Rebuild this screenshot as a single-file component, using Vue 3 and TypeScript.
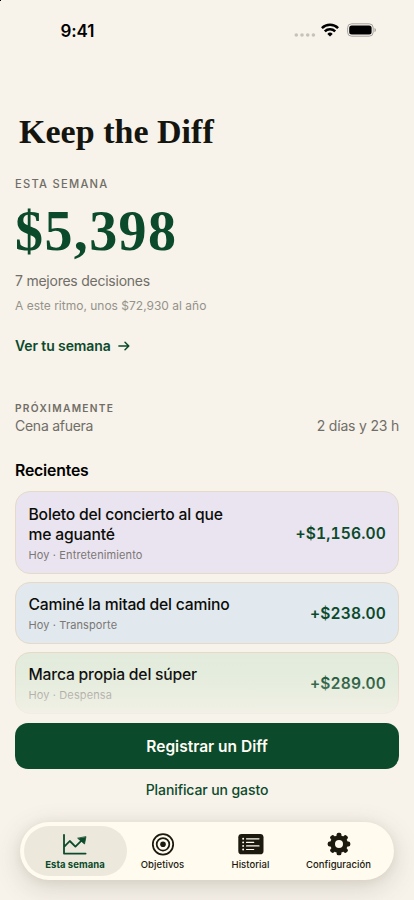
<script setup lang="ts">
interface Entry { title: string; meta: string; amount: string; tone: string }
interface Tab { label: string; icon: string; active?: boolean }

const entries: Entry[] = [
  { title: 'Boleto del concierto al que me aguanté', meta: 'Hoy · Entretenimiento', amount: '+$1,156.00', tone: 'lilac' },
  { title: 'Caminé la mitad del camino', meta: 'Hoy · Transporte', amount: '+$238.00', tone: 'blue' },
  { title: 'Marca propia del súper', meta: 'Hoy · Despensa', amount: '+$289.00', tone: 'green' },
]
const tabs: Tab[] = [
  { label: 'Esta semana', icon: 'chart', active: true },
  { label: 'Objetivos', icon: 'target' },
  { label: 'Historial', icon: 'list' },
  { label: 'Configuración', icon: 'gear' },
]
const teeth = [0, 45, 90, 135, 180, 225, 270, 315]
</script>

<template>
  <div class="screen">
    <i class="corner"></i>
    <header class="status">
      <span class="time">9:41</span>
      <div class="indicators">
        <svg class="dots" width="22" height="4" viewBox="0 0 22 4"><circle cx="2.3" cy="2" r="1.8" /><circle cx="8" cy="2" r="1.8" /><circle cx="13.7" cy="2" r="1.8" /><circle cx="19.4" cy="2" r="1.8" /></svg>
        <svg class="wifi" width="18" height="14" viewBox="0 0 18 14" fill="none" stroke="#000" stroke-width="2.5">
          <path d="M.9 5.1a11.5 11.5 0 0 1 16.2 0" /><path d="M3.8 8.3a7.4 7.4 0 0 1 10.4 0" />
          <path d="M6.3 10.9a3.8 3.8 0 0 1 5.4 0L9 13.6z" fill="#000" stroke="none" />
        </svg>
        <svg class="battery" width="30" height="14" viewBox="0 0 30 14">
          <rect x=".6" y=".8" width="25.6" height="12.4" rx="4" fill="none" stroke="#a5a29c" stroke-width="1" />
          <rect x="2.2" y="2.4" width="22.4" height="9.2" rx="2.5" />
          <path d="M27.5 5v4.2q1.5-.6 1.5-2.1t-1.5-2.1" fill="#a5a29c" />
        </svg>
      </div>
    </header>

    <h1 class="title">Keep the Diff</h1>

    <main class="content">
      <section class="summary">
        <p class="eyebrow">ESTA SEMANA</p>
        <p class="total">$5,398</p>
        <p class="count">7 mejores decisiones</p>
        <p class="pace">A este ritmo, unos $72,930 al año</p>
        <a class="link"><span>Ver tu semana</span>
          <svg width="12" height="10" viewBox="0 0 12 10" fill="none" stroke="currentColor" stroke-width="1.5" stroke-linecap="round" stroke-linejoin="round"><path d="M.9 5h9.8M7 1.2 10.8 5 7 8.8" /></svg>
        </a>
      </section>

      <section class="upcoming">
        <p class="eyebrow small">PRÓXIMAMENTE</p>
        <div class="row"><span class="what">Cena afuera</span><span class="when">2 días y 23 h</span></div>
      </section>

      <section class="recent">
        <h2>Recientes</h2>
        <article v-for="e in entries" :key="e.title" class="card" :class="e.tone">
          <div class="copy">
            <h3>{{ e.title }}</h3>
            <p>{{ e.meta }}</p>
          </div>
          <strong>{{ e.amount }}</strong>
        </article>
        <div class="fade"></div>
      </section>

      <button class="primary">Registrar un Diff</button>
      <button class="secondary">Planificar un gasto</button>
    </main>

    <nav class="tabs">
      <div v-for="t in tabs" :key="t.label" class="tab" :class="[t.icon, { active: t.active }]">
        <svg v-if="t.icon === 'chart'" width="26" height="24" viewBox="0 0 26 24" fill="none" stroke="currentColor" stroke-width="1.8" stroke-linecap="round" stroke-linejoin="round">
          <path d="M2 2.8v18.8h21.6M2.8 14.2l5-5.2 5.6 5.6 6.3-6.2" /><path d="m23.9 5-1.4 7-6.6-5.6z" fill="currentColor" stroke-width=".8" />
        </svg>
        <svg v-else-if="t.icon === 'target'" width="24" height="24" viewBox="0 0 24 24" fill="none" stroke="currentColor" stroke-width="1.75">
          <circle cx="12" cy="12.3" r="10.2" /><circle cx="12" cy="12.3" r="6.3" /><circle cx="12" cy="12.3" r="2.8" fill="currentColor" stroke="none" />
        </svg>
        <svg v-else-if="t.icon === 'list'" width="26" height="24" viewBox="0 0 26 24">
          <rect x=".3" y="1.9" width="25.2" height="20.4" rx="3.4" fill="currentColor" />
          <g stroke="#fffbee" stroke-width="1.2" stroke-linecap="round"><path d="M8.5 6.8H21M8.5 10.4h7.2M8.5 13.9H21M8.5 17.5h7.2" /><path d="M5.1 6.8h.1M5.1 10.4h.1M5.1 13.9h.1M5.1 17.5h.1" stroke-width="1.9" /></g>
        </svg>
        <svg v-else width="24" height="24" viewBox="0 0 24 24">
          <g fill="currentColor"><rect v-for="a in teeth" :key="a" x="9.6" y=".7" width="4.8" height="6" rx="1.9" :transform="`rotate(${a} 12 12)`" /></g>
          <circle cx="12" cy="12" r="6.4" fill="none" stroke="currentColor" stroke-width="4.8" />
        </svg>
        <span>{{ t.label }}</span>
      </div>
    </nav>
  </div>
</template>

<style>
body { background: #f7f2ea; }
</style>

<style scoped>
* { box-sizing: border-box; }
.screen { position: relative; width: 414px; height: 900px; overflow: hidden; background: #f7f2ea; font-family: Inter, sans-serif; color: #14150f; display: flex; flex-direction: column; }
.corner { position: absolute; left: 0; top: 0; width: 1px; height: 1px; background: #000; }
h1, h2, h3, p { margin: 0; }
.status { height: 60px; flex: none; display: flex; justify-content: space-between; align-items: center; padding: 1px 37px 0 60.5px; }
.time { font-size: 17px; font-weight: 600; letter-spacing: -.1px; color: #000; }
.indicators { display: flex; align-items: center; height: 14px; }
.dots { fill: #c6c2bb; margin: 9px 5px 0 0; }
.wifi { margin: -1px 8px 0 0; }
.battery { margin-top: -1px; }
.title { font: 700 34px/40px "Liberation Serif", serif; padding-left: 19px; margin-top: 52px; letter-spacing: .02px; }
.content { padding: 0 15px; display: flex; flex-direction: column; }
.summary { display: flex; flex-direction: column; align-items: flex-start; padding-top: 24px; }
.eyebrow { font-size: 11.2px; line-height: 16px; font-weight: 500; letter-spacing: 1.25px; color: #706e67; }
.total { font: 700 56px/62px "Liberation Serif", serif; color: #0b4a2b; letter-spacing: 1.4px; margin-top: 8px; }
.count { font-size: 14px; line-height: 20px; letter-spacing: -.24px; color: #706e67; margin-top: 9px; }
.pace { font-size: 12px; line-height: 16px; color: #95928a; margin-top: 7px; }
.link { display: flex; align-items: center; gap: 7px; font-size: 14px; line-height: 20px; font-weight: 600; letter-spacing: -.1px; color: #0b4a2b; margin-top: 22px; }
.upcoming { margin-top: 44px; }
.small { font-size: 10.2px; font-weight: 600; letter-spacing: 1.3px; }
.row { display: flex; justify-content: space-between; font-size: 14px; line-height: 20px; letter-spacing: -.26px; color: #706e67; }
.when { letter-spacing: -.2px; }
.recent { position: relative; display: flex; flex-direction: column; gap: 8px; margin-top: 25px; }
h2 { font-size: 15.8px; line-height: 20px; font-weight: 600; letter-spacing: -.18px; color: #000; margin-bottom: 2px; }
.card { display: flex; align-items: center; justify-content: space-between; border: 1px solid #e5dac9; border-radius: 15px; height: 62px; padding: 1px 12px 0 12.5px; }
.card.lilac { height: 83px; background: #eae4f0; }
.card.blue { background: #e1e8ee; }
.card.green { background: #e3ecdc; }
.copy { width: 215px; padding-top: 1px; }
h3 { font-size: 15.7px; line-height: 20.5px; font-weight: 500; letter-spacing: -.2px; color: #0c0d09; }
.copy p { font-size: 11px; line-height: 15px; letter-spacing: .12px; color: #7a7775; margin-top: 2px; }
.card strong { font-size: 15.6px; font-weight: 600; font-variant-numeric: tabular-nums; letter-spacing: .14px; color: #0b4a2b; }
.fade { position: absolute; left: 0; right: 0; bottom: -9px; height: 71px; background: linear-gradient(#f7f2ea00, #f7f2ea0d 30%, #f7f2ea33 48%, #f7f2ea66 65%, #f7f2eab8 85%, #f7f2ea); }
.card.green h3 { color: #000; }
.card.green .copy p { color: #94928c; }
.primary, .secondary { font-family: inherit; border: 0; padding: 0; }
.primary { position: relative; height: 45.5px; margin-top: 9px; border-radius: 13px; background: #0b4a2b; color: #fffdf5; font-size: 15.5px; font-weight: 600; padding-top: 1px; }
.secondary { height: 20px; margin-top: 10.5px; background: none; color: #0b4a2b; font-size: 14px; font-weight: 500; letter-spacing: -.1px; }
.tabs { display: flex; margin: 23px 20px 0 19.5px; height: 58px; padding: 4px; border-radius: 29px; background: #fffbee; box-shadow: 0 7px 26px #66604f38, 0 1px 10px #66604f14; flex: none; }
.tab { width: 88px; display: flex; flex-direction: column; align-items: center; color: #1c190f; padding-top: 6px; }
.tab.active { width: 103px; background: #ece8dc; border-radius: 25px; color: #0b4a2b; }
.tab.target { width: 72px; }
.tab.list { width: 104px; }
.tab.gear { width: 72px; }
.tab span { font-size: 9.5px; line-height: 13px; font-weight: 550; letter-spacing: .06px; margin-top: 2px; white-space: nowrap; }
.tab.active span { font-weight: 700; letter-spacing: .05px; }
</style>
